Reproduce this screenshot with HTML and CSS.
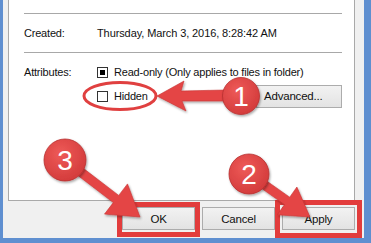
FILE: index.html
```html
<!DOCTYPE html>
<html lang="en">
<head>
    <meta charset="UTF-8">
    <title>Folder Properties</title>
    <link rel="stylesheet" href="styles.css">
</head>
<body>
    <div class="frame">
        <div class="dialog">
            <div class="panel">
                <hr class="sep">
                <div class="row">
                    <span class="label">Created:</span>
                    <span class="value">Thursday, March 3, 2016, 8:28:42 AM</span>
                </div>
                <hr class="sep">
                <div class="row attr-row">
                    <span class="label">Attributes:</span>
                    <div class="attr-list">
                        <label class="check"><span class="box mixed"></span>Read-only (Only applies to files in folder)</label>
                        <div class="attr-line">
                            <label class="check"><span class="box"></span>Hidden</label>
                            <button class="btn btn-adv">Advanced...</button>
                        </div>
                    </div>
                </div>
            </div>
            <div class="actions">
                <button class="btn">OK</button>
                <button class="btn">Cancel</button>
                <button class="btn">Apply</button>
            </div>
        </div>

        <!-- tutorial markup drawn over the dialog -->
        <svg class="marks" width="371" height="243" viewBox="0 0 371 243">
            <defs>
                <filter id="shade" x="-20%" y="-20%" width="140%" height="140%">
                    <feDropShadow dx="1" dy="1.5" stdDeviation="1.2" flood-color="#000" flood-opacity="0.35"/>
                </filter>
                <radialGradient id="ball" cx="40%" cy="35%" r="70%">
                    <stop offset="0" stop-color="#ee5a58"/>
                    <stop offset="1" stop-color="#d23a3a"/>
                </radialGradient>
            </defs>

            <rect class="box-mark" x="119.5" y="204.5" width="78" height="30"/>
            <rect class="box-mark" x="277.5" y="202.5" width="82" height="33"/>

            <ellipse class="ring" cx="120" cy="96" rx="36" ry="13.5"/>

            <g class="arrow" filter="url(#shade)">
                <polygon points="157,96 184,81 181,91 226,90 226,101 182,101 186,111"/>
                <polygon points="82,167.3 118.7,195.4 127.5,183.9 140,217 104.5,214.1 113.3,202.6 76.6,174.5"/>
                <polygon points="266.3,180.7 289.7,197.2 296.9,187 310,217 277.3,214.8 284.5,204.6 261.1,188.1"/>
            </g>

            <g class="badge" filter="url(#shade)">
                <circle cx="241" cy="96" r="18.5"/>
                <circle cx="249" cy="174" r="20"/>
                <circle cx="65" cy="160" r="21"/>
            </g>
            <text class="num" x="241" y="106">1</text>
            <text class="num" x="249" y="184">2</text>
            <text class="num" x="65" y="170">3</text>
        </svg>
    </div>
</body>
</html>
```

FILE: styles.css
```css
html, body {
    margin: 0;
    padding: 0;
}
body {
    width: 371px;
    height: 243px;
    overflow: hidden;
    background-color: #5f8fd0;
    font-family: "Liberation Sans", Arial, sans-serif;
    font-size: 11px;
    color: #111;
}
.frame {
    position: relative;
    height: 243px;
    box-sizing: border-box;
    padding: 0 7px 5px 3px;
}
.dialog {
    height: 100%;
    background-color: #f0f0f0;
    padding: 0 9px 0 5px;
    display: flex;
    flex-direction: column;
}
.panel {
    height: 201px;
    box-sizing: border-box;
    background-color: #fff;
    border: 1px solid #a9a9a9;
    border-top: none;
    padding: 13px 12px 0 15px;
}
.sep {
    height: 1px;
    margin: 0;
    border: none;
    background-color: #a8a8a8;
}
.row {
    display: flex;
    align-items: center;
    height: 38px;
}
.label {
    width: 73px;
    flex-shrink: 0;
    letter-spacing: -0.2px;
}
.value {
    letter-spacing: -0.1px;
}
.attr-row {
    align-items: flex-start;
    height: auto;
    padding-top: 10px;
}
.attr-row .label {
    line-height: 18px;
}
.attr-list {
    flex: 1;
    display: flex;
    flex-direction: column;
    gap: 3px;
}
.attr-line {
    display: flex;
    align-items: center;
    justify-content: space-between;
    height: 24px;
}
.check {
    display: flex;
    align-items: center;
    height: 18px;
    letter-spacing: -0.2px;
}
.box {
    width: 11px;
    height: 11px;
    box-sizing: border-box;
    border: 1px solid #333;
    background-color: #fff;
    margin-right: 6px;
    display: flex;
    align-items: center;
    justify-content: center;
}
.box.mixed::after {
    content: "";
    width: 5px;
    height: 5px;
    background-color: #000;
}
.btn {
    font-family: "Liberation Sans", Arial, sans-serif;
    font-size: 11.5px;
    letter-spacing: -0.2px;
    color: #111;
    height: 23px;
    width: 73px;
    padding: 0;
    border: 1px solid #acacac;
    border-radius: 0;
    background: linear-gradient(#f2f2f2, #e3e3e3);
}
.btn-adv {
    width: 86px;
    text-align: left;
    padding-left: 7px;
}
.actions {
    display: flex;
    justify-content: flex-end;
    gap: 7px;
    margin-top: 6px;
}
.marks {
    position: absolute;
    top: 0;
    left: 0;
    pointer-events: none;
}
.box-mark {
    fill: none;
    stroke: #e23c3c;
    stroke-width: 5;
}
.ring {
    fill: none;
    stroke: #e04040;
    stroke-width: 3;
}
.arrow polygon {
    fill: #e44545;
    stroke: #c83434;
    stroke-width: 0.6;
    stroke-linejoin: round;
}
.badge circle {
    fill: url(#ball);
    stroke: #b83030;
    stroke-width: 0.8;
}
.num {
    font-family: "Liberation Sans", Arial, sans-serif;
    font-size: 28px;
    fill: #fff;
    text-anchor: middle;
}
```
